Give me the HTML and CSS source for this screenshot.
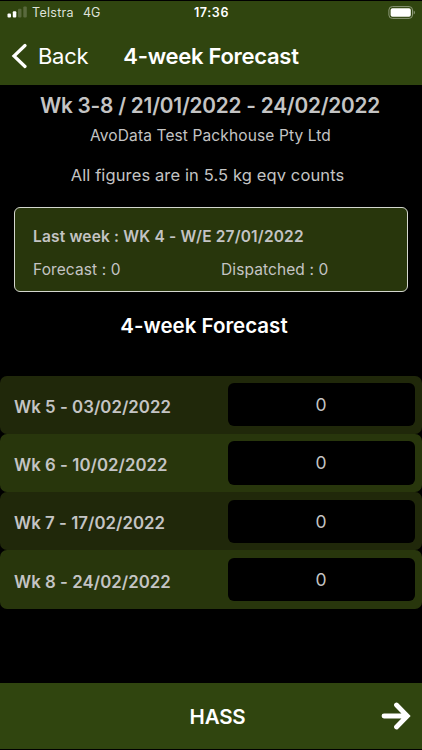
FILE: index.html
```html
<!DOCTYPE html>
<html lang="en">
<head>
    <meta charset="UTF-8">
    <meta name="viewport" content="width=device-width, initial-scale=1.0">
    <title>4-week Forecast</title>
    <link rel="stylesheet" href="styles.css">
</head>
<body>
    <header class="header">
        <div class="status-bar">
            <div class="carrier">
                <svg class="signal" width="20" height="12" viewBox="0 0 20 12">
                    <rect x="0.5" y="7.5" width="3.5" height="4" rx="1" fill="#fff"/>
                    <rect x="5.8" y="5.2" width="3.5" height="6.3" rx="1" fill="#fff"/>
                    <rect x="11" y="2.8" width="3.5" height="8.7" rx="1" fill="#59693d"/>
                    <rect x="16.3" y="0.5" width="3.5" height="11" rx="1" fill="#59693d"/>
                </svg>
                <span class="carrier-name">Telstra</span>
                <span class="network">4G</span>
            </div>
            <span class="clock">17:36</span>
            <svg class="battery" width="28" height="13" viewBox="0 0 28 13">
                <rect x="0.9" y="0.6" width="23.6" height="11.8" rx="3.4" fill="none" stroke="#8c9878"/>
                <rect x="2.6" y="2.3" width="20.2" height="8.4" rx="1.8" fill="#fff"/>
                <path d="M25.7 4.4c1.7.7 1.7 3.5 0 4.2z" fill="#8c9878"/>
            </svg>
        </div>
        <div class="nav-bar">
            <a class="back">
                <svg class="back-icon" width="16" height="26" viewBox="0 0 16 26">
                    <path d="M14 2.5L3 13l11 10.5" fill="none" stroke="#fff" stroke-width="3.2" stroke-linecap="round"/>
                </svg>
                <span class="back-text">Back</span>
            </a>
            <h1 class="title">4-week Forecast</h1>
        </div>
    </header>

    <main class="content">
        <h2 class="period">Wk 3-8 / 21/01/2022 - 24/02/2022</h2>
        <p class="packhouse">AvoData Test Packhouse Pty Ltd</p>
        <p class="note">All figures are in 5.5 kg eqv counts</p>

        <section class="last-week">
            <h3 class="last-week-title">Last week : WK 4 - W/E 27/01/2022</h3>
            <div class="last-week-figures">
                <span>Forecast : 0</span>
                <span>Dispatched : 0</span>
            </div>
        </section>

        <h2 class="forecast-title">4-week Forecast</h2>
        <form class="weeks">
            <div class="week">
                <label class="week-label" for="wk5">Wk 5 - 03/02/2022</label>
                <input class="week-input" type="text" id="wk5" value="0">
            </div>
            <div class="week">
                <label class="week-label" for="wk6">Wk 6 - 10/02/2022</label>
                <input class="week-input" type="text" id="wk6" value="0">
            </div>
            <div class="week">
                <label class="week-label" for="wk7">Wk 7 - 17/02/2022</label>
                <input class="week-input" type="text" id="wk7" value="0">
            </div>
            <div class="week">
                <label class="week-label" for="wk8">Wk 8 - 24/02/2022</label>
                <input class="week-input" type="text" id="wk8" value="0">
            </div>
        </form>
    </main>

    <footer class="footer">
        <span class="variety">HASS</span>
        <svg class="next-icon" width="30" height="28" viewBox="0 0 30 28">
            <path d="M3 14h22M15.5 3L26.3 14L15.5 25" fill="none" stroke="#fff" stroke-width="4.8" stroke-linecap="round" stroke-linejoin="miter"/>
        </svg>
    </footer>
</body>
</html>
```
FILE: styles.css
```css
* {
    box-sizing: border-box;
}
body {
    display: flex;
    flex-direction: column;
    height: 750px;
    margin: 0;
    padding: 1px 0;
    overflow: hidden;
    background-color: #000;
    color: #c4c4c4;
    font-family: Inter, "Liberation Sans", sans-serif;
}
h1, h2, h3, p {
    margin: 0;
    white-space: nowrap;
}
.header {
    height: 84px;
    background-color: #30450f;
    color: #fff;
}
.status-bar {
    display: grid;
    grid-template-columns: 1fr auto 1fr;
    align-items: center;
    height: 23px;
    padding: 0 6px 0 7px;
    font-size: 12.5px;
}
.carrier {
    display: flex;
    align-items: center;
    color: #dfe2da;
}
.signal {
    margin: -1px 5px 0 0;
}
.carrier-name {
    letter-spacing: 0.3px;
}
.network {
    margin-left: 9px;
}
.clock {
    font-weight: 600;
    letter-spacing: 0.6px;
}
.battery {
    justify-self: end;
}
.nav-bar {
    display: grid;
    grid-template-columns: 1fr auto 1fr;
    align-items: center;
    height: 64px;
    padding: 0 11px;
}
.back {
    display: flex;
    align-items: center;
    gap: 11px;
    font-size: 22px;
    letter-spacing: -0.3px;
}
.title {
    font-size: 22px;
    font-weight: 600;
    letter-spacing: -0.28px;
}
.content {
    flex: 1;
    text-align: center;
}
.period {
    padding: 7px 2px 0 0;
    font-size: 20.8px;
    font-weight: 600;
    letter-spacing: -0.22px;
    line-height: 28px;
}
.packhouse {
    margin-top: 5px;
    padding-right: 1px;
    font-size: 15.5px;
    letter-spacing: 0.12px;
    line-height: 22px;
}
.note {
    margin-top: 16px;
    padding-right: 7px;
    font-size: 16.5px;
    letter-spacing: 0.12px;
    line-height: 24px;
}
.last-week {
    height: 85px;
    margin: 20px 14px 0 14px;
    padding: 19px 18px 0;
    border: 1px solid #d4d6cf;
    border-radius: 6px;
    background-color: #28360c;
    text-align: left;
}
.last-week-title {
    font-size: 15.5px;
    font-weight: 600;
    letter-spacing: 0.17px;
    line-height: 20px;
}
.last-week-figures {
    display: grid;
    grid-template-columns: 188px 1fr;
    margin-top: 13px;
    font-size: 15.5px;
    letter-spacing: 0.1px;
    line-height: 20px;
}
.forecast-title {
    margin-top: 20px;
    padding-right: 14px;
    color: #fff;
    font-size: 20.5px;
    font-weight: 600;
    line-height: 28px;
}
.weeks {
    margin-top: 35.5px;
}
.week {
    display: flex;
    align-items: center;
    justify-content: space-between;
    height: 58.33px;
    padding: 0 7.5px 0 14px;
    border-radius: 7px;
    background-color: #28360c;
}
.week:nth-child(odd) {
    background-color: #20280a;
}
.week-label {
    padding-top: 4px;
    font-size: 16.8px;
    font-weight: 600;
    letter-spacing: 0.05px;
}
.week-input {
    width: 187px;
    height: 43.5px;
    padding: 0;
    border: none;
    border-radius: 6px;
    background-color: #000;
    color: #c4c4c4;
    font-family: inherit;
    font-size: 17.5px;
    text-align: center;
}
.footer {
    display: grid;
    grid-template-columns: 1fr auto 1fr;
    align-items: center;
    height: 66px;
    padding: 0 11px 0 12px;
    background-color: #30450f;
    color: #fff;
}
.variety {
    grid-column: 2;
    padding-left: 12px;
    font-size: 20.5px;
    font-weight: 600;
    letter-spacing: -0.2px;
}
.next-icon {
    justify-self: end;
}
```
